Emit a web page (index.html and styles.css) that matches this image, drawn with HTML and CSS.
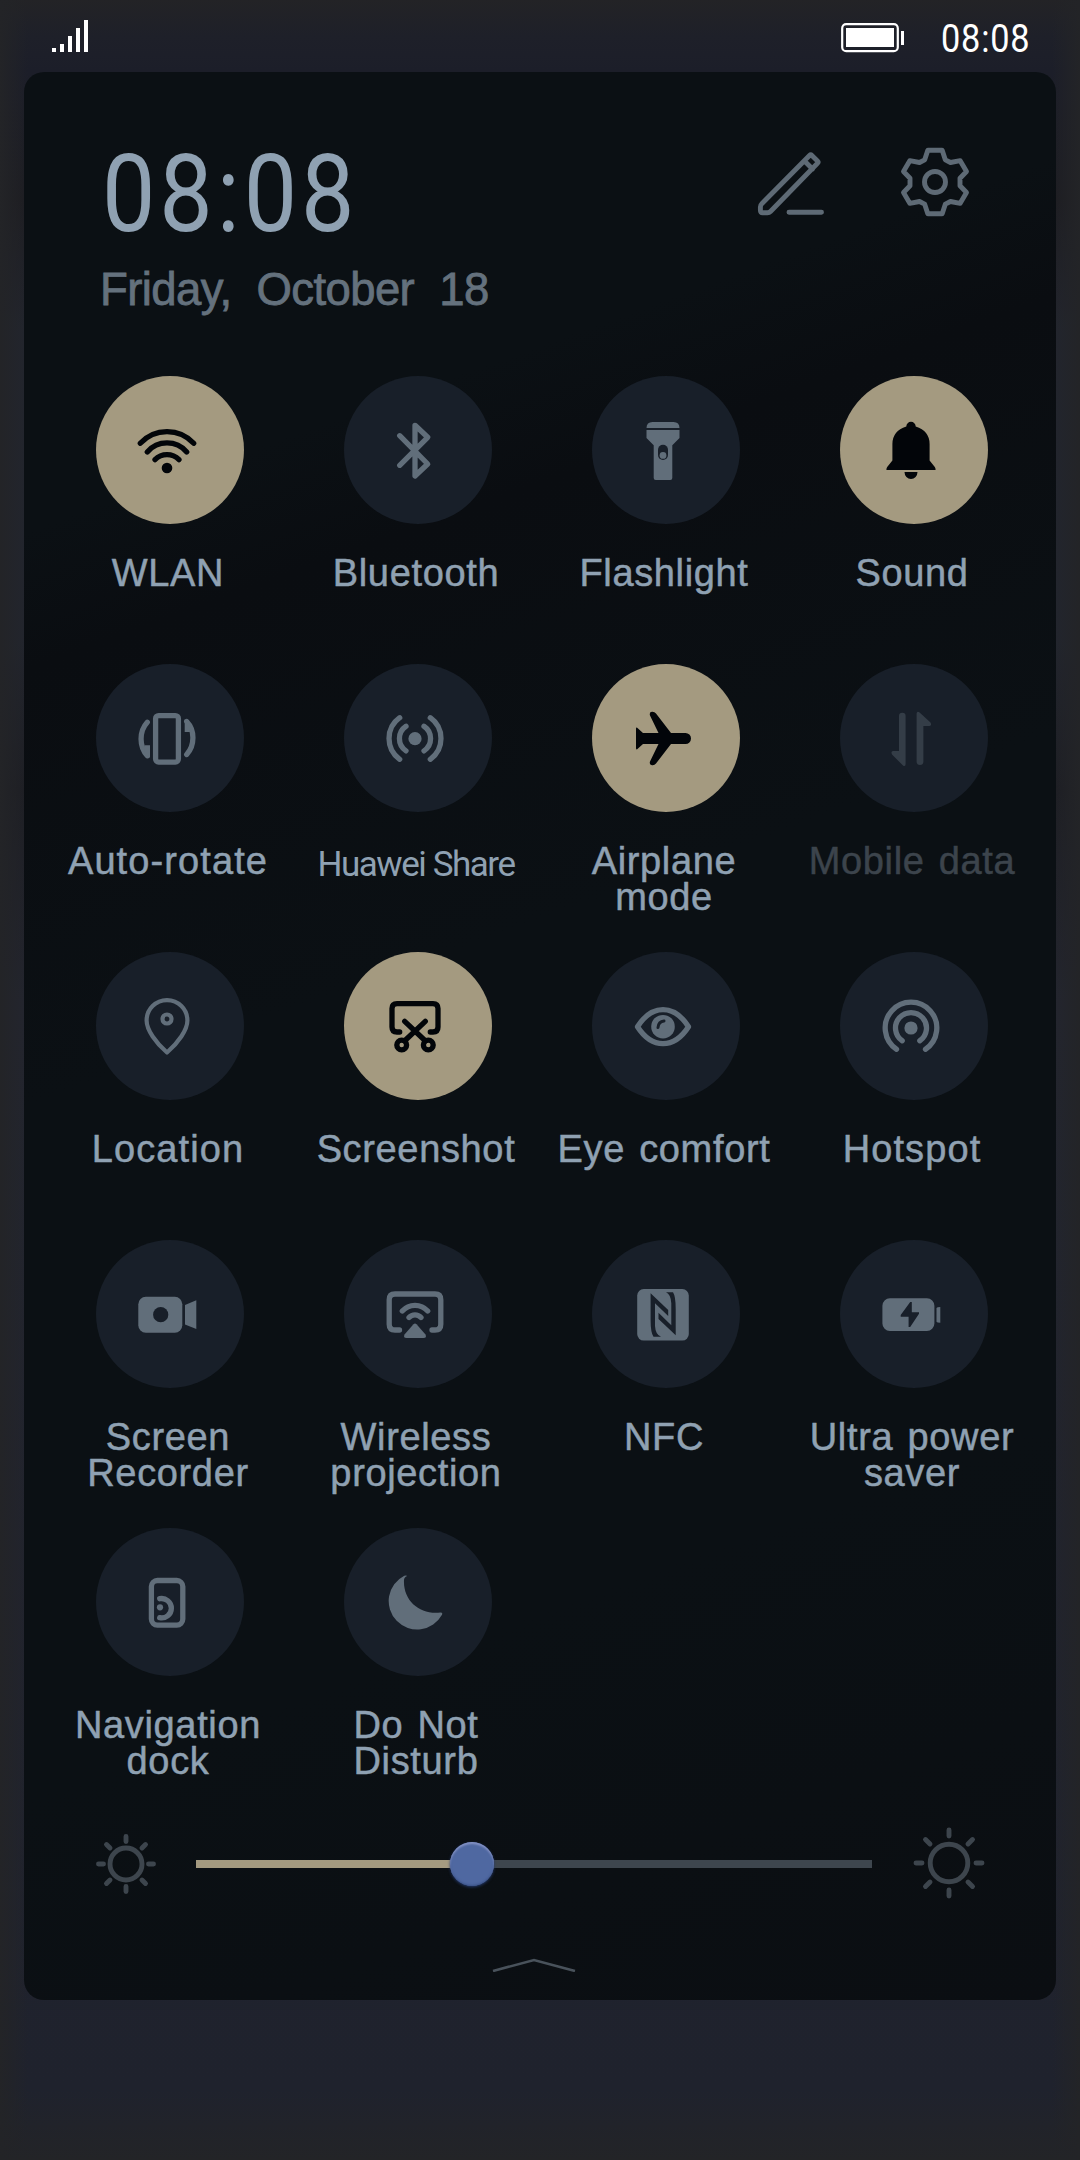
FILE: index.html
```html
<!DOCTYPE html>
<html lang="en">
<head>
<meta charset="utf-8">
<title>Quick settings</title>
<link rel="stylesheet" href="styles.css">
</head>
<body>
<header class="status">
  <svg class="signal" width="36" height="32" viewBox="0 0 36 32"><path d="M0 28h4v4H0zM8 24h4v8H8zM16 16h4v16h-4zM24 8h4v24h-4zM32 0h4v32h-4z"/></svg>
  <svg class="battery" width="64" height="30" viewBox="0 0 64 30"><rect x="1.2" y="1.2" width="55.6" height="27" rx="4" fill="none" stroke="#fff" stroke-width="2.2"/><path d="M5 5h48v19H5zM60 8h3v14h-3z"/></svg>
  <span class="status-time">08:08</span>
</header>
<main class="panel">
  <section class="head">
    <div class="when">
      <div class="clock">08:08</div>
      <div class="date">Friday, October 18</div>
    </div>
    <svg class="edit" width="76" height="76" viewBox="0 0 76 76"><path d="M12 58.500 59.500 10.500q1.200-1.200 2.400 0l5.600 5.400q1.200 1.200 0 2.400L20.500 66.500q-1.200 1.200-3 1.200h-5q-2.100 0-2.100-2.100v-3.600q0-2 1.600-3.500zM54.500 16l8 8M39 67.300h32.500"/></svg>
    <svg class="gear" width="76" height="76" viewBox="-38 -38 76 76"><path d="M-7.200-31.700H7.200L10.300-22.200 15.500-19.500 25.200-21.300 31.500-10.500 25-3.700V3.700L31.500 10.500 25.200 21.300 15.500 19.500 10.300 22.200 7.200 31.700H-7.200L-10.300 22.200-15.500 19.500-25.200 21.300-31.500 10.500-25 3.700V-3.700L-31.500-10.500-25.200-21.300-15.500-19.500-10.300-22.200z"/><circle r="10.500"/></svg>
  </section>

  <section class="tiles">
    <div class="tile on"><span class="disc"><svg viewBox="-40 -40 80 80"><g class="line"><path d="M-26.700-6.700a36.300 36.300 0 0 1 53.400 0M-19.700 2a26 26 0 0 1 39.400 0M-12 9.700a16.900 16.900 0 0 1 24 0"/></g><circle cy="18" r="5.300"/></svg></span><span class="label">WLAN</span></div>
    <div class="tile"><span class="disc"><svg viewBox="-40 -40 80 80"><path class="line" d="M-15.300-14.300 12.700 14 0 26V-24.700L12.700-12.700-15.300 15.300"/></svg></span><span class="label">Bluetooth</span></div>
    <div class="tile"><span class="disc"><svg viewBox="-40 -40 80 80"><path d="M-16.500-22q0-6 6-6h21q6 0 6 6zM-16.500-20h33v8L9.300-4.700V28q0 2-2 2H-7.300q-2 0-2-2V-4.700L-16.500-12z"/><rect class="hole" x="-5" y="-5.300" width="10" height="15.300" rx="5"/><circle cy="5.400" r="3.400"/></svg></span><span class="label">Flashlight</span></div>
    <div class="tile on"><span class="disc"><svg viewBox="-40 -40 80 80"><path d="M-4.700-23.500a4.700 4.700 0 0 1 9.400 0Q18.600-19 18.600-6v16.500l5.200 6.500q.8 1 .8 3h-49.200q0-2 .8-3l5.200-6.500V-6Q-18.600-19-4.700-23.500zM-6.500 22h13a6.500 7 0 0 1-13 0z"/></svg></span><span class="label">Sound</span></div>

    <div class="tile"><span class="disc"><svg viewBox="-40 -40 80 80"><g class="line"><rect x="-11.400" y="-22.400" width="22.800" height="46.500" rx="3"/><path d="M-19.700-15.700c-8.300 9-8.300 24.500 0 33.500M19.700 16.500c8.300-9 8.300-24.500 0-33"/></g><path d="M-22.500 7.300h5.500v12.500l-5-3zM23-6h-5.300v-12.700l4.500 3z"/></svg></span><span class="label wide">Auto-rotate</span></div>
    <div class="tile"><span class="disc"><svg viewBox="-40 -40 80 80"><circle cy=".7" r="6.600"/><path class="line" d="M-15.300-20.300a25.600 25.600 0 0 0 0 41.600M15.300-20.300a25.600 25.600 0 0 1 0 41.600M-9-11.700a14.800 14.800 0 0 0 0 24.600M9-11.700a14.800 14.800 0 0 1 0 24.600"/></svg></span><span class="label narrow">Huawei Share</span></div>
    <div class="tile on"><span class="disc"><svg viewBox="-40 -40 80 80"><path d="M-27-9q0-2.500 2-.5l5 4.500H-4.500L-13-22.500q-1-3.500 2-3.700 2.500-.2 4 1.700L8-5H22.500a5.500 5.500 0 0 1 0 11H8L-7 25.500q-1.500 2-4 1.700-3-.5-2-3.700L-4.500 6H-20l-5 4.500q-2 2-2-.5z"/></svg></span><span class="label">Airplane<br>mode</span></div>
    <div class="tile off"><span class="disc"><svg viewBox="-40 -40 80 80"><path d="M-12-22a3.300 3.300 0 0 1 6.600 0V26q0 3-2.600 1.500L-19 16.500q-1.500-3 1-3.500h6zM12.400 23.500a3.400 3.400 0 0 1-6.800 0V-24.500q.4-3 3-1L19.500-15.500q1.500 3-1 3.500h-6.100z"/></svg></span><span class="label">Mobile data</span></div>

    <div class="tile"><span class="disc"><svg viewBox="-40 -40 80 80"><g class="line thin"><path d="M0 26.500C-11 17-20.400 4-20.400-5.500a20.400 20.400 0 0 1 40.800 0C20.400 4 11 17 0 26.500z"/><circle cy="-7" r="4.500"/></g></svg></span><span class="label wide">Location</span></div>
    <div class="tile on"><span class="disc"><svg viewBox="-40 -40 80 80"><g class="line"><path d="M-15.300 6H-18q-5 0-5-5v-18.400q0-5 5-5h36q5 0 5 5V1q0 5-5 5h-2.700M-10.300-4.700 10.500 15M10.300-4.700-10.500 15"/><circle cx="-13.300" cy="19" r="4.900"/><circle cx="13.300" cy="19" r="4.900"/></g></svg></span><span class="label">Screenshot</span></div>
    <div class="tile"><span class="disc"><svg viewBox="-40 -40 80 80"><path class="line" d="M-25.500.7C-11-22 11-22 25.500.7 11 23.200-11 23.200-25.500.7z"/><circle cy=".7" r="11.800"/><path class="cut" d="M-5 1.500Q-4.500-4.500 1-5"/></svg></span><span class="label">Eye comfort</span></div>
    <div class="tile"><span class="disc"><svg viewBox="-40 -40 80 80"><circle cy="2" r="6.600"/><path class="line" d="M-14.500 23.300a25.800 25.800 0 1 1 29 0M-8.800 14.800a15.500 15.500 0 1 1 17.600 0"/></svg></span><span class="label wide">Hotspot</span></div>

    <div class="tile"><span class="disc"><svg viewBox="-40 -40 80 80"><rect x="-28.700" y="-17.300" width="44" height="36" rx="7.500"/><path d="M18-9 29.300-13.700V15L18 10.500z"/><circle class="hole" cx="-6.300" cy=".7" r="7.600"/></svg></span><span class="label">Screen<br>Recorder</span></div>
    <div class="tile"><span class="disc"><svg viewBox="-40 -40 80 80"><path class="line" d="M-15.500 16H-20q-5.800 0-5.800-5.800v-24.400q0-5.800 5.800-5.800h40q5.800 0 5.800 5.800v24.400q0 5.800-5.800 5.800h-3M-12.700-3a17 17 0 0 1 25.400 0M-6 3.500a8 8 0 0 1 12 0"/><path d="M-1.500 10.300q1.500-1.500 3 0l9 10.200q1.500 3.500-2 3.500h-17q-3.500 0-2-3.500z"/></svg></span><span class="label">Wireless<br>projection</span></div>
    <div class="tile"><span class="disc"><svg viewBox="-40 -40 80 80"><rect x="-25.800" y="-25" width="51.600" height="51.600" rx="6.500"/><path class="hole" d="M-12.400-20.700 5.200-4v6L-8-10.700V12q.5 8.700 6 10.700h-7.500q-2.900-4-2.900-16.700zM12.700 21.300-4.500 5v-6.300L8.300 11.300v-22Q7.800-19.700 3-21.700h7q2.700 4 2.700 16.700z"/></svg></span><span class="label">NFC</span></div>
    <div class="tile"><span class="disc"><svg viewBox="-40 -40 80 80"><path d="M-21.100-15.700h37a7.500 7.500 0 0 1 7.500 7.500V9.500a7.500 7.500 0 0 1-7.500 7.500h-37a7.500 7.500 0 0 1-7.500-7.500V-8.200a7.500 7.500 0 0 1 7.500-7.500zM25.500-6q.5-1 3.800-1V8.700q-3.300 0-3.800-1z"/><path class="hole" d="M-.8-12-10.300 1v1.700h7.900V13h1.600L8-.200v-1.500H.8V-12z"/></svg></span><span class="label">Ultra power<br>saver</span></div>

    <div class="tile"><span class="disc"><svg viewBox="-40 -40 80 80"><g class="line"><rect x="-15.600" y="-21.500" width="31.400" height="44.600" rx="6"/><path d="M-7.300-3.300a9.700 9.700 0 1 1 0 19"/></g><circle cx="-7" cy="5.300" r="3.100"/></svg></span><span class="label">Navigation<br>dock</span></div>
    <div class="tile"><span class="disc"><svg viewBox="-40 -40 80 80"><path d="M-10.700-26.300q2.500-.5 3 .3-3 .8-3.300 4C-12-1 5 13 25.500 10.500q2.500 0 1.500 2.200A28.400 28.400 0 1 1-10.700-26.300z"/></svg></span><span class="label">Do Not<br>Disturb</span></div>
  </section>

  <section class="brightness">
    <svg class="sun" width="60" height="60" viewBox="-30 -30 60 60"><circle r="16"/><path d="M0-22.500v-5M0 22.500v5M-22.500 0h-5M22.500 0h5M-16-16l-3.500-3.500M16-16l3.500-3.500M-16 16l-3.500 3.500M16 16l3.500 3.500"/></svg>
    <div class="track"><div class="fill"></div><div class="thumb"></div></div>
    <svg class="sun big" width="72" height="72" viewBox="-36 -36 72 72"><circle r="18.800"/><path d="M0-27v-6M0 27v6M-27 0h-6M27 0h6M-19-19l-4.500-4.500M19-19l4.500-4.500M-19 19l-4.500 4.500M19 19l4.500 4.500"/></svg>
  </section>
  <svg class="handle" width="84" height="14" viewBox="0 0 84 14"><path d="M1 13 42 2l41 11"/></svg>
</main>
</body>
</html>
```
FILE: styles.css
```css
* { box-sizing: border-box; }
body {
  margin: 0;
  width: 1080px;
  height: 2160px;
  overflow: hidden;
  font-family: "Liberation Sans", Arial, sans-serif;
  color: #8fa1b2;
  background:
    linear-gradient(90deg, #232427 0, rgba(35,36,39,0) 28px, rgba(35,36,39,0) 1052px, #232427 100%),
    linear-gradient(180deg, #232326 0, #1e2029 36px, #1c1e29 72px, #1d1d22 200px, #22252e 330px, #22252e 640px, #1d1e24 790px, #23252f 1000px, #1f222d 2090px, #232427 2160px);
}
.status {
  height: 72px;
  padding: 20px 0 0 52px;
  display: flex;
  align-items: flex-start;
  color: #fff;
}
.status svg { fill: #fff; }
.battery { margin: 3px 0 0 753px; }
.status-time {
  margin: -1px 0 0 36px;
  font: 39px/40px Roboto, sans-serif;
  letter-spacing: .9px;
  transform: scaleX(.88);
  transform-origin: left;
}
.panel {
  width: 1032px;
  height: 1928px;
  margin-left: 24px;
  border-radius: 20px;
  background: linear-gradient(160deg, #0b1014 0%, #0b1014 20%, #0a0d11 26%, #0b1014 45%, #0b1014 75%, #0b0e12 100%);
  display: flex;
  flex-direction: column;
}
.head {
  height: 304px;
  display: flex;
  align-items: flex-start;
  padding: 72px 0 0 76px;
}
.when { width: 650px; }
.clock {
  margin: 1px 0 0 2px;
  font: 108px/98px Roboto, sans-serif;
  letter-spacing: 4.500px;
  transform: scaleX(.88);
  transform-origin: left;
}
.date {
  margin: 21px 0 0 0;
  font-size: 45.500px;
  line-height: 52px;
  letter-spacing: -.6px;
  word-spacing: 13px;
  color: #64717d;
  -webkit-text-stroke: .8px #64717d;
  white-space: nowrap;
}
.head svg { fill: none; stroke: #5e6a75; stroke-width: 4.900px; stroke-linecap: round; stroke-linejoin: round; }
.edit { margin-top: 1px; }
.gear { margin: 0 0 0 70.500px; }
.tiles {
  display: grid;
  grid-template-columns: repeat(4, 248px);
  grid-auto-rows: 288px;
  padding-left: 22px;
  height: 1440px;
}
.tile { display: flex; flex-direction: column; align-items: center; }
.disc {
  width: 148px;
  height: 148px;
  flex: none;
  border-radius: 50%;
  background: #181f29;
  display: flex;
  align-items: center;
  padding-left: 31px;
}
.disc svg { width: 80px; height: 80px; fill: #616e7a; }
.line { fill: none; stroke: #616e7a; stroke-width: 5.300px; stroke-linecap: round; stroke-linejoin: round; }
.thin { stroke-width: 4.200px; }
.hole { fill: #181f29; }
.cut { fill: none; stroke: #181f29; stroke-width: 3px; stroke-linecap: round; }
.on .disc { background: #a49a80; }
.on svg { fill: #020509; }
.on .line { stroke: #020509; }
.off svg { fill: #343d47; }
.off .label { color: #3c444c; }
.label {
  margin-top: 31px;
  margin-right: 4px;
  font-size: 38px;
  line-height: 36px;
  letter-spacing: .65px;
  word-spacing: 3px;
  text-align: center;
  white-space: nowrap;
  -webkit-text-stroke: .5px;
}
.wide { letter-spacing: 1.1px; }
.narrow {
  margin-top: 35px;
  font: 35px/36px Roboto, sans-serif;
  letter-spacing: -1.450px;
  word-spacing: 0;
  -webkit-text-stroke: 0;
}
.brightness {
  height: 96px;
  display: flex;
  align-items: center;
  padding-left: 72px;
}
.sun { fill: none; stroke: #3d454d; stroke-width: 4.900px; stroke-linecap: round; }
.big { margin: -3px 0 0 1px; }
.track {
  width: 676px;
  height: 8px;
  margin: 0 40px 0 40px;
  background: #3e464e;
  position: relative;
}
.fill { width: 276px; height: 8px; background: #a49a80; }
.thumb {
  position: absolute;
  left: 254px;
  top: -18px;
  width: 44px;
  height: 44px;
  border-radius: 50%;
  background: #4f68a1;
  box-shadow: inset 0 2px 2px #8492c4, inset 0 -1px 2px #3d5488, 0 1px 3px #253b70;
}
.handle { margin: 46px 0 0 468px; fill: none; stroke: #49525b; stroke-width: 2.600px; }
```
